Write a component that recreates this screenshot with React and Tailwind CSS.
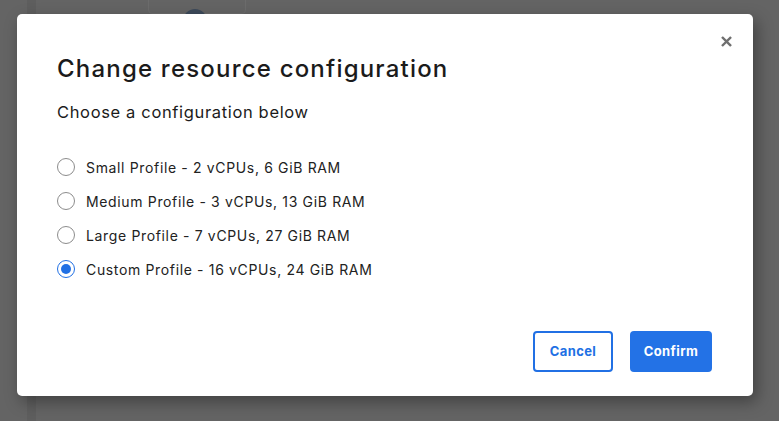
import React, {useState} from 'react';

const profiles = [
    {id: 'small', label: 'Small Profile - 2 vCPUs, 6 GiB RAM'},
    {id: 'medium', label: 'Medium Profile - 3 vCPUs, 13 GiB RAM'},
    {id: 'large', label: 'Large Profile - 7 vCPUs, 27 GiB RAM'},
    {id: 'custom', label: 'Custom Profile - 16 vCPUs, 24 GiB RAM'},
];

const Radio = ({checked}) => (
    <span
        className={`flex items-center justify-center w-[18px] h-[18px] rounded-full border-[1.5px] bg-white ${
            checked ? 'border-[#2170e4]' : 'border-[#8c8c8c]'
        }`}
    >
        {checked && <span className="w-[10px] h-[10px] rounded-full bg-[#2170e4]" />}
    </span>
);

const App = () => {
    const [selected, setSelected] = useState('custom');

    return (
        <div
            className="relative w-[779px] h-[421px] overflow-hidden bg-[#646464]"
            style={{fontFamily: 'Inter, "Noto Sans", sans-serif'}}
        >
            {/* faint page behind the overlay */}
            <div className="absolute left-[27px] top-0 bottom-0 w-[9px] bg-[#5e5e5e]" />
            <div className="absolute left-[148px] top-[-10px] w-[98px] h-[24px] rounded border border-[#6c6c6c]" />
            <div className="absolute left-[183px] top-[9px] w-[24px] h-[24px] rounded-full bg-[#3d4a5a]" />

            <div className="relative pl-[17px] pt-[14px]">
                <div className="relative w-[736px] h-[382px] bg-white rounded-[5px] shadow-[4px_6px_16px_rgba(0,0,0,0.35)] flex flex-col px-10">
                    <button className="absolute right-[21px] top-[21px] w-[12px] h-[12px] flex items-center justify-center text-[#6f6f6f]">
                        <svg viewBox="0 0 12 12" width="11" height="11">
                            <path d="M2 2 L10 10 M10 2 L2 10" stroke="currentColor" strokeWidth="2.6" strokeLinecap="square" />
                        </svg>
                    </button>

                    <h2 className="mt-[40px] text-[24px] leading-[30px] font-medium text-[#1b1b1b] tracking-[1.2px]">
                        Change resource configuration
                    </h2>
                    <p className="mt-[16px] text-[16.5px] leading-[24px] text-[#1b1b1b] tracking-[0.65px]">
                        Choose a configuration below
                    </p>

                    <div className="mt-[26px] flex flex-col">
                        {profiles.map((p) => (
                            <label
                                key={p.id}
                                className="flex items-center h-[34px] cursor-pointer"
                                onClick={() => setSelected(p.id)}
                            >
                                <Radio checked={selected === p.id} />
                                <span className="ml-[11px] text-[14px] text-[#222] tracking-[0.65px]">{p.label}</span>
                            </label>
                        ))}
                    </div>

                    <div className="mt-auto mb-[24px] flex justify-end gap-[17px] pr-px">
                        <button className="w-[80px] h-[41px] rounded-[4px] border-2 border-[#2170e4] text-[#2170e4] text-[13px] font-bold tracking-[0.4px]">
                            Cancel
                        </button>
                        <button className="w-[82px] h-[41px] rounded-[4px] bg-[#2372e6] text-white text-[13px] font-bold tracking-[0.4px]">
                            Confirm
                        </button>
                    </div>
                </div>
            </div>
        </div>
    );
};

export default App;
